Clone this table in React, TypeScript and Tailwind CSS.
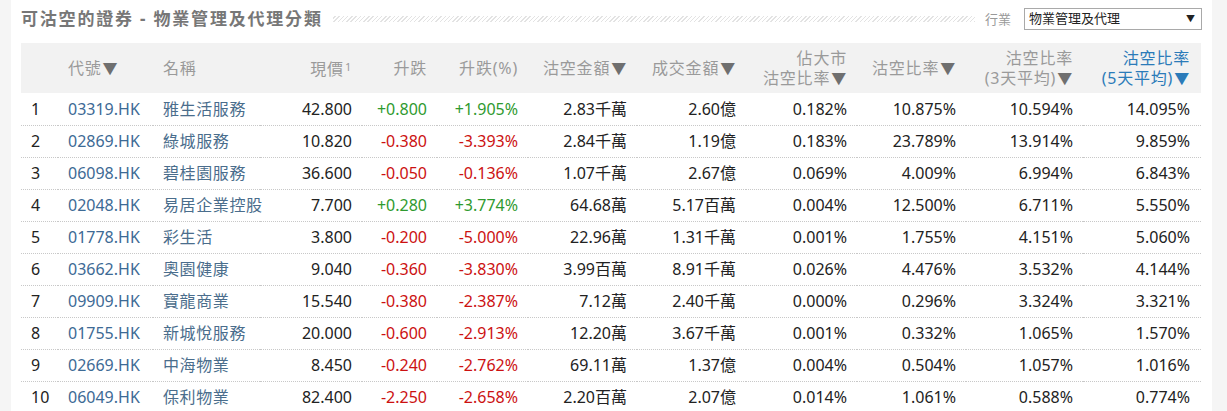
const rows = [
  ['1', '03319.HK', '雅生活服務', '42.800', '+0.800', '+1.905%', '2.83千萬', '2.60億', '0.182%', '10.875%', '10.594%', '14.095%'],
  ['2', '02869.HK', '綠城服務', '10.820', '-0.380', '-3.393%', '2.84千萬', '1.19億', '0.183%', '23.789%', '13.914%', '9.859%'],
  ['3', '06098.HK', '碧桂園服務', '36.600', '-0.050', '-0.136%', '1.07千萬', '2.67億', '0.069%', '4.009%', '6.994%', '6.843%'],
  ['4', '02048.HK', '易居企業控股', '7.700', '+0.280', '+3.774%', '64.68萬', '5.17百萬', '0.004%', '12.500%', '6.711%', '5.550%'],
  ['5', '01778.HK', '彩生活', '3.800', '-0.200', '-5.000%', '22.96萬', '1.31千萬', '0.001%', '1.755%', '4.151%', '5.060%'],
  ['6', '03662.HK', '奧園健康', '9.040', '-0.360', '-3.830%', '3.99百萬', '8.91千萬', '0.026%', '4.476%', '3.532%', '4.144%'],
  ['7', '09909.HK', '寶龍商業', '15.540', '-0.380', '-2.387%', '7.12萬', '2.40千萬', '0.000%', '0.296%', '3.324%', '3.321%'],
  ['8', '01755.HK', '新城悅服務', '20.000', '-0.600', '-2.913%', '12.20萬', '3.67千萬', '0.001%', '0.332%', '1.065%', '1.570%'],
  ['9', '02669.HK', '中海物業', '8.450', '-0.240', '-2.762%', '69.11萬', '1.37億', '0.004%', '0.504%', '1.057%', '1.016%'],
  ['10', '06049.HK', '保利物業', '82.400', '-2.250', '-2.658%', '2.20百萬', '2.07億', '0.014%', '1.061%', '0.588%', '0.774%'],
]

const widths = ['w-[37px]', 'w-[95px]', 'w-[107px]', 'w-[102px]', 'w-[75px]', 'w-[91px]', 'w-[109px]', 'w-[109px]', 'w-[111px]', 'w-[109px]', 'w-[117px]', 'w-[118px]']

function Arrow({ blue }: { blue?: boolean }) {
  return (
    <span className={`ml-[1px] text-[15px] leading-none ${blue ? 'text-[#2b7bb9]' : 'text-[#6f6f6f]'}`}>
      ▼
    </span>
  )
}

function changeColor(v: string) {
  return v.startsWith('+') ? 'text-[#2f9a2f]' : 'text-[#cc1111]'
}

export default function App() {
  return (
    <div className="w-[1227px] h-[411px] overflow-hidden bg-[#f5f5f5] pl-[11px] pr-[15px] font-['Noto_Sans','Noto_Sans_CJK_TC',sans-serif]">
      <div className="bg-white h-full px-[10px]">
        {/* title bar */}
        <div className="flex items-start h-[43px]">
          <h2 className="mt-[7px] text-[17px] leading-[24px] font-bold text-[#777] tracking-[1.8px] whitespace-nowrap">
            可沽空的證券 - 物業管理及代理分類
          </h2>
          <div className="flex-1 mt-[16px] ml-[10px] mr-[10px] h-[6px] bg-[repeating-linear-gradient(-45deg,#e3e3e3_0px,#e3e3e3_1px,transparent_1px,transparent_3px)]" />
          <span className="mt-[9px] text-[13px] leading-[20px] text-[#999] mr-[13px]">行業</span>
          <div className="mt-[8px] w-[178px] h-[22px] border border-[#a9a9a9] flex items-center justify-between pl-[4px] pr-[6px] text-[13px] text-[#222]">
            <span>物業管理及代理</span>
            <span className="text-[9px]">▼</span>
          </div>
        </div>

        <table className="table-fixed border-collapse w-[1180px] text-[16px] whitespace-nowrap">
          <colgroup>
            {widths.map((w, i) => (
              <col key={i} className={w} />
            ))}
          </colgroup>
          <thead>
            <tr className="bg-[#f2f2f2] h-[50px] text-[#9a9a9a] leading-[20px] tracking-[0.8px]">
              <th className="font-normal" />
              <th className="font-normal text-left pl-[10px]">代號<Arrow /></th>
              <th className="font-normal text-left pl-[10px]">名稱</th>
              <th className="font-normal text-right pr-[10px]">
                現價<span className="text-[11px] align-[4px] ml-[1px]">1</span>
              </th>
              <th className="font-normal text-right pr-[10px]">升跌</th>
              <th className="font-normal text-right pr-[10px]">升跌(%)</th>
              <th className="font-normal text-right pr-[10px]">沽空金額<Arrow /></th>
              <th className="font-normal text-right pr-[10px]">成交金額<Arrow /></th>
              <th className="font-normal text-right pr-[10px]">
                <div>佔大市</div>
                <div>沽空比率<Arrow /></div>
              </th>
              <th className="font-normal text-right pr-[10px]">沽空比率<Arrow /></th>
              <th className="font-normal text-right pr-[10px]">
                <div>沽空比率</div>
                <div>(3天平均)<Arrow /></div>
              </th>
              <th className="font-normal text-right pr-[11px] text-[#2b7bb9]">
                <div>沽空比率</div>
                <div>(5天平均)<Arrow blue /></div>
              </th>
            </tr>
          </thead>
          <tbody>
            {rows.map((r) => (
              <tr key={r[0]} className="h-[32px] border-b border-dotted border-[#c8c8c8] text-[#222]">
                <td className="pl-[10px]">{r[0]}</td>
                <td className="pl-[10px] text-[#3d6a95]">{r[1]}</td>
                <td className="pl-[10px] text-[#4a6d8c] tracking-[0.6px] overflow-visible">{r[2]}</td>
                <td className="text-right pr-[10px]">{r[3]}</td>
                <td className={`text-right pr-[10px] ${changeColor(r[4])}`}>{r[4]}</td>
                <td className={`text-right pr-[10px] ${changeColor(r[5])}`}>{r[5]}</td>
                <td className="text-right pr-[10px]">{r[6]}</td>
                <td className="text-right pr-[10px]">{r[7]}</td>
                <td className="text-right pr-[10px]">{r[8]}</td>
                <td className="text-right pr-[10px]">{r[9]}</td>
                <td className="text-right pr-[10px]">{r[10]}</td>
                <td className="text-right pr-[11px]">{r[11]}</td>
              </tr>
            ))}
          </tbody>
        </table>
      </div>
    </div>
  )
}
